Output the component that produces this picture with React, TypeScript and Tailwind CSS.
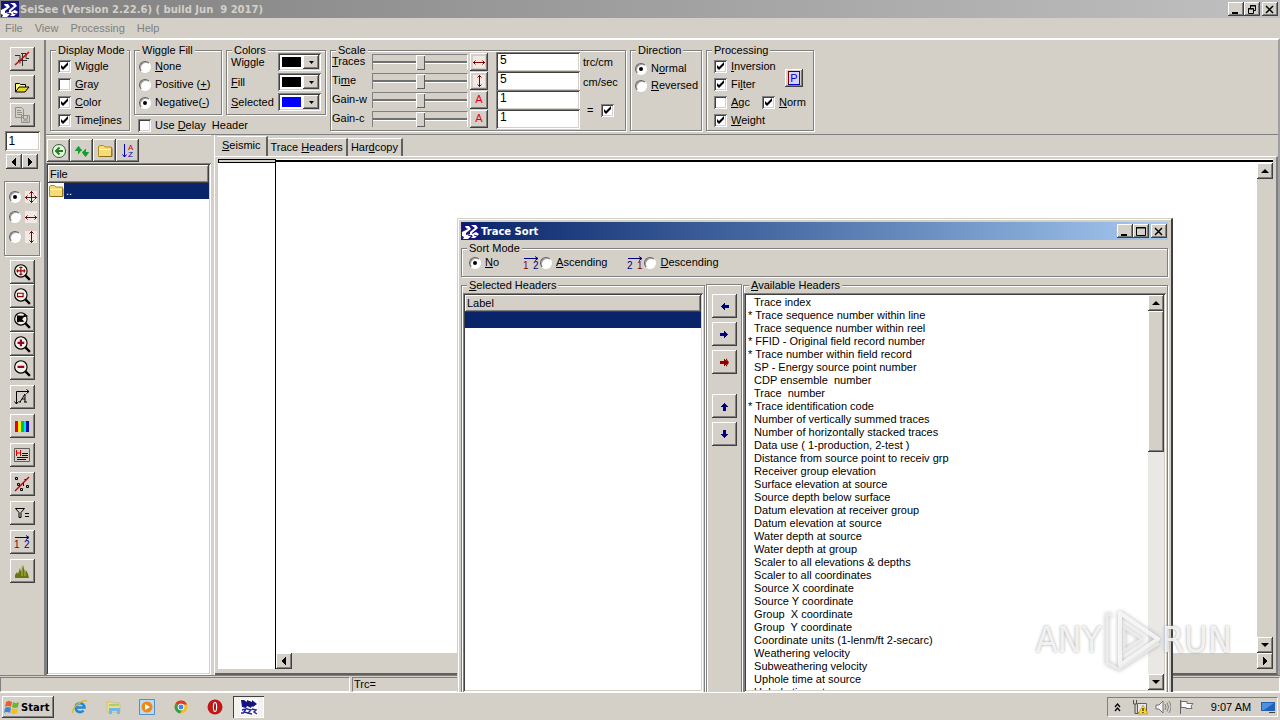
import React from "react";
import clsx from "clsx";

const RAISED =
  "bg-[#d4d0c8] shadow-[inset_-1px_-1px_0_#404040,inset_1px_1px_0_#ffffff,inset_-2px_-2px_0_#808080]";
const SUNKEN =
  "bg-white shadow-[inset_1px_1px_0_#808080,inset_-1px_-1px_0_#ffffff,inset_2px_2px_0_#404040,inset_-2px_-2px_0_#d4d0c8]";
const ETCHED = "border border-[#808080] shadow-[1px_1px_0_#ffffff,inset_1px_1px_0_#ffffff]";

// "&" marks the mnemonic letter, as in the resource files
function Mnemonic({ text }: { text: string }) {
  const at = text.indexOf("&");
  if (at < 0) return <span className="whitespace-pre">{text}</span>;
  return (
    <span className="whitespace-pre">
      {text.slice(0, at)}
      <u className="underline-offset-1">{text[at + 1]}</u>
      {text.slice(at + 2)}
    </span>
  );
}

function Group({ title, className, children }: { title: string; className?: string; children: React.ReactNode }) {
  return (
    <fieldset className={clsx("min-w-0", ETCHED, className)}>
      <legend className="ml-[5px] bg-[#d4d0c8] px-0.5 leading-3">
        <Mnemonic text={title} />
      </legend>
      {children}
    </fieldset>
  );
}

function Check({ text, label, checked = false }: { text?: string; label?: string; checked?: boolean }) {
  return (
    <label className="flex h-[17px] items-center gap-1">
      <span className="grid size-[13px] shrink-0">
        <input
          type="checkbox"
          defaultChecked={checked}
          aria-label={label}
          className={clsx("peer col-start-1 row-start-1 size-[13px] appearance-none", SUNKEN)}
        />
        <svg viewBox="0 0 13 13" className="pointer-events-none col-start-1 row-start-1 hidden size-[13px] peer-checked:block">
          <path d="M3 5v3l2 2 5-5V2L5 7z" fill="#000" />
        </svg>
      </span>
      {text && <Mnemonic text={text} />}
    </label>
  );
}

function Radio({ name, text, label, checked = false }: { name: string; text?: string; label?: string; checked?: boolean }) {
  return (
    <label className="flex h-[17px] items-center gap-1">
      <span className="grid size-3 shrink-0 place-items-center">
        <input
          type="radio"
          name={name}
          defaultChecked={checked}
          aria-label={label}
          className="peer col-start-1 row-start-1 size-3 appearance-none rounded-full border border-t-[#606060] border-r-white border-b-white border-l-[#606060] bg-white shadow-[inset_1px_1px_0_#a0a0a0]"
        />
        <span className="pointer-events-none col-start-1 row-start-1 hidden size-1 rounded-full bg-black peer-checked:block" />
      </span>
      {text && <Mnemonic text={text} />}
    </label>
  );
}

function Tool({ label, className, children }: { label: string; className?: string; children: React.ReactNode }) {
  return (
    <button type="button" aria-label={label} className={clsx("grid shrink-0 place-items-center", RAISED, className)}>
      {children}
    </button>
  );
}

function Pix({ size = 16, children, className }: { size?: number; children: React.ReactNode; className?: string }) {
  return (
    <svg width={size} height={size} viewBox="0 0 16 16" fill="none" className={className}>
      {children}
    </svg>
  );
}

function Arrow({ dir }: { dir: "up" | "down" | "left" | "right" }) {
  const d = {
    up: "M3.5 0h1v1h1v1h1v1h1v1h-7V3h1V2h1V1h1z",
    down: "M.5 0h7v1h-1v1h-1v1h-1v1h-1V3h-1V2h-1V1h-1z",
    left: "M6 0v8H5V7H4V6H3V5H2V3h1V2h1V1h1V0z",
    right: "M2 0v8h1V7h1V6h1V5h1V3H5V2H4V1H3V0z",
  }[dir];
  const flat = dir === "up" || dir === "down";
  return (
    <svg width="8" height={flat ? 4 : 8} viewBox={flat ? "0 0 8 4" : "0 0 8 8"}>
      <path d={d} fill="#000" />
    </svg>
  );
}

function AppLogo({ light = false }: { light?: boolean }) {
  if (light) {
    return (
      <svg width="18" height="16" viewBox="0 0 18 16" className="shrink-0">
        <path d="M0 0h18v16H0z" fill="#fff" />
        <path d="M1 1h3l3 2V1l5 2V1l5 4-4 3-1-1-1 2-4-2-1 2-4-1z" fill="#14147c" />
        <path d="M2 11l4-1-2 3 4 1M7 10l4 1-3 3 4 1M12 10l4 1-2 2 3 2M1 14h3" stroke="#2a2a9a" strokeWidth="1.500" fill="none" />
      </svg>
    );
  }
  return (
    <svg width="18" height="16" viewBox="0 0 18 16" className="shrink-0">
      <path d="M0 0h18v16H0z" fill="#14147c" />
      <path d="M3 3h4l2 3-5 4v2l4-1 1 2-3 3H1l1-2-2-1V9l6-3-2-1zM9 2h5l2 3-6 5v1l4-2 3 2-4 4H9l2-2-3-1V9l5-4z" fill="#fff" />
      <path d="M6 12l4 1M12 12l3 1" stroke="#14147c" />
    </svg>
  );
}

function Folder() {
  return (
    <Pix>
      <path d="M1.500 4l1-1.500h4L8 4h6.500v9.500h-13z" fill="#f6dc76" stroke="#b08a24" />
      <path d="M2 6.500h12" stroke="#fff3b8" />
      <path d="M3 13.500h12v-8" stroke="#8a6a18" />
    </Pix>
  );
}

function MoveIcon({ kind }: { kind: "both" | "h" | "v" }) {
  return (
    <svg width="12" height="12" viewBox="0 0 12 12" fill="none" stroke="#800000" className="shrink-0 bg-[#f4e8e4]">
      {kind !== "v" && <path d="M0 6.500h12M2.500 4.500l-2 2 2 2M9.500 4.500l2 2-2 2" />}
      {kind !== "h" && <path d="M6.500 0v12M4.500 2.500l2-2 2 2M4.500 9.500l2 2 2-2" />}
    </svg>
  );
}

function Lens({ children }: { children?: React.ReactNode }) {
  return (
    <Pix size={18}>
      <circle cx="7" cy="7" r="5.500" fill="#f4f0ea" stroke="#000" />
      <path d="M11 11l4 4" stroke="#000" strokeWidth="2" />
      {children}
    </Pix>
  );
}

function SortIcon({ first, second }: { first: string; second: string }) {
  return (
    <svg width="17" height="14" viewBox="0 0 17 14">
      <path d="M1 2.500h14M12 .5l3 2-3 2" stroke="#000080" fill="none" />
      <text x="0" y="13" fontSize="10" fill={first === "1" ? "#800000" : "#000080"}>{first}</text>
      <text x="10" y="13" fontSize="10" fill={second === "1" ? "#800000" : "#000080"}>{second}</text>
    </svg>
  );
}

function WindowButtons({ restore = false }: { restore?: boolean }) {
  return (
    <div className="ml-auto flex">
      <Tool label="Minimize" className="h-3.5 w-4">
        <svg width="10" height="9" viewBox="0 0 10 9"><path d="M1 7h6v2H1z" /></svg>
      </Tool>
      <Tool label={restore ? "Restore" : "Maximize"} className="h-3.5 w-4">
        <svg width="10" height="9" viewBox="0 0 10 9" fill="none" stroke="#000">
          {restore ? <path d="M3.500 3V.5h5v5H7M3 1h6M1.500 3.500h5v5h-5zM1 4h6" /> : <path d="M.5.500h9v8h-9zM0 1h10" />}
        </svg>
      </Tool>
      <Tool label="Close" className="ml-0.5 h-3.5 w-4">
        <svg width="10" height="9" viewBox="0 0 10 9"><path d="M1 1l7 7M8 1L1 8" stroke="#000" strokeWidth="1.500" /></svg>
      </Tool>
    </div>
  );
}

function ColorPick({ text, id, color }: { text: string; id: string; color: "black" | "blue" }) {
  return (
    <div className="flex h-5 items-center justify-between pr-1 pl-1">
      <label htmlFor={id}><Mnemonic text={text} /></label>
      <div className={clsx("flex h-[18px] w-[43px] p-0.5", SUNKEN)}>
        <select
          id={id}
          className={clsx(
            "min-w-0 flex-1 appearance-none border-2 border-white text-transparent",
            color === "blue" ? "bg-[#0000ff]" : "bg-black"
          )}
        >
          <option>{color}</option>
        </select>
        <span className={clsx("pointer-events-none grid w-4 place-items-center", RAISED)}>
          <svg width="5" height="3" viewBox="0 0 5 3"><path d="M0 0h5L2.500 3z" /></svg>
        </span>
      </div>
    </div>
  );
}

const scales = [
  { text: "&Traces", id: "traces", value: "5", icon: "h" },
  { text: "Ti&me", id: "time", value: "5", icon: "v" },
  { text: "Gain-w", id: "gain-w", value: "1", icon: "A" },
  { text: "Gain-c", id: "gain-c", value: "1", icon: "A" },
];

function ScaleRow({ text, id, value, icon }: (typeof scales)[number]) {
  return (
    <div className="flex h-[19px] items-center">
      <label htmlFor={id} className="w-10 shrink-0"><Mnemonic text={text} /></label>
      <input
        type="range"
        aria-label={id + " slider"}
        className="h-4 w-24 appearance-none border-t border-l border-[#808080] border-r border-r-white bg-transparent [&::-webkit-slider-runnable-track]:h-[3px] [&::-webkit-slider-runnable-track]:border-b [&::-webkit-slider-runnable-track]:border-white [&::-webkit-slider-runnable-track]:bg-[#707070] [&::-webkit-slider-thumb]:-mt-1.5 [&::-webkit-slider-thumb]:h-[15px] [&::-webkit-slider-thumb]:w-[9px] [&::-webkit-slider-thumb]:appearance-none [&::-webkit-slider-thumb]:bg-[#d4d0c8] [&::-webkit-slider-thumb]:shadow-[inset_1px_1px_0_#ffffff,inset_-1px_-1px_0_#606060]"
      />
      <Tool label={"Reset " + id} className="ml-0.5 size-[18px]">
        {icon === "A" ? (
          <span className="text-red-600">A</span>
        ) : (
          <MoveIcon kind={icon as "h" | "v"} />
        )}
      </Tool>
      <input id={id} defaultValue={value} className={clsx("ml-2 h-5 w-[84px] px-1 pb-1 text-xs", SUNKEN)} />
    </div>
  );
}

function Ribbon() {
  return (
    <div className="flex items-start gap-1 border-b border-[#808080] pt-1 pb-[3px] pl-1">
      <Group title="Display Mode" className="h-[87px] w-20">
        <div className="flex flex-col gap-px pt-0.5 pl-[7px]">
          <Check text="Wi&ggle" checked />
          <Check text="&Gray" />
          <Check text="&Color" checked />
          <Check text="Time&lines" checked />
        </div>
      </Group>
      <div className="flex h-[87px] flex-col gap-0.5">
        <div className="flex gap-1">
          <Group title="Wiggle Fill" className="h-[71px] w-[88px]">
            <div className="flex flex-col gap-px pt-0.5 pl-1">
              <Radio name="fill" text="&None" />
              <Radio name="fill" text="Positive (&+)" />
              <Radio name="fill" text="Negative(&-)" checked />
            </div>
          </Group>
          <Group title="Colors" className="h-[71px] w-[100px]">
            <div className="-mt-1 flex flex-col">
              <ColorPick text="Wi&ggle" id="c-wiggle" color="black" />
              <ColorPick text="&Fill" id="c-fill" color="black" />
              <ColorPick text="&Selected" id="c-selected" color="blue" />
            </div>
          </Group>
        </div>
        <div className="pl-1">
          <Check text="Use &Delay  Header" />
        </div>
      </div>
      <Group title="Scale" className="h-[87px] w-[296px]">
        <div className="-mt-1 flex pl-px">
          <div className="flex flex-col">
            {scales.map((s) => (
              <ScaleRow key={s.id} {...s} />
            ))}
          </div>
          <div className="flex flex-col pl-[3px]">
            <span className="flex h-5 items-center">trc/cm</span>
            <span className="flex h-5 items-center">cm/sec</span>
            <div className="flex flex-1 items-center gap-2 pl-1">
              =
              <Check label="Link gains" checked />
            </div>
          </div>
        </div>
      </Group>
      <Group title="Direction" className="h-[87px] w-[72px]">
        <div className="flex flex-col pt-1 pl-1">
          <Radio name="direction" text="N&ormal" checked />
          <Radio name="direction" text="&Reversed" />
        </div>
      </Group>
      <Group title="Processing" className="h-[87px] w-[108px]">
        <div className="grid grid-cols-[48px_auto] gap-y-px pt-0.5 pl-[7px]">
          <div className="flex flex-col gap-px">
            <Check text="&Inversion" checked />
            <Check text="Fi&lter" checked />
          </div>
          <div className="flex items-center pt-1 pl-[23px]">
            <Tool label="Processing parameters" className="size-[18px]">
              <span className="border border-r-[#800000] border-l-[#800000] bg-[#d8d0ff] px-px leading-3 text-[#0000c0]">P</span>
            </Tool>
          </div>
          <Check text="&Agc" />
          <Check text="&Norm" checked />
          <Check text="&Weight" checked />
        </div>
      </Group>
    </div>
  );
}

function Rail() {
  return (
    <aside className="flex w-[46px] shrink-0 flex-col items-center border-r-2 border-[#808080] pt-[7px]">
      <div className="flex flex-col gap-1">
        <Tool label="Disable grid" className="h-6 w-[25px]">
          <Pix>
            <path d="M1 4.500h5v8M7 2.500h5v5h3M4 9.500h9M8.500 3v12" stroke="#303030" />
            <path d="M1 14L15 1" stroke="#d00000" strokeWidth="1.500" />
          </Pix>
        </Tool>
        <Tool label="Open" className="h-6 w-[25px]">
          <Pix>
            <path d="M1.500 13V4.500h4l1 1h5V8" fill="#ffff90" stroke="#000" />
            <path d="M1.500 13L5 8h10l-4 5z" fill="#e8d820" stroke="#000" />
          </Pix>
        </Tool>
        <Tool label="Save as" className="h-6 w-[25px]">
          <Pix>
            <path d="M1.500.500h6l2 2v8h-8zM3 3.500h4M3 5.500h5M3 7.500h5M7.500 8.500h8v7h-8zM9.500 9v3h4V9M10 15v-2h3v2" stroke="#909090" />
          </Pix>
        </Tool>
      </div>
      <input aria-label="Trace" defaultValue="1" className={clsx("mt-1 h-5 w-[35px] px-1 text-xs", SUNKEN)} />
      <div className="mt-[3px] flex">
        <Tool label="Previous" className="h-[15px] w-4"><Arrow dir="left" /></Tool>
        <Tool label="Next" className="h-[15px] w-4"><Arrow dir="right" /></Tool>
      </div>
      <div className={clsx("mt-3 flex h-[75px] w-9 flex-col gap-[3px] pt-1.5 pl-1", ETCHED)}>
        <div className="flex items-center gap-1"><Radio name="move" label="Both" checked /><MoveIcon kind="both" /></div>
        <div className="flex items-center gap-1"><Radio name="move" label="Horizontal" /><MoveIcon kind="h" /></div>
        <div className="flex items-center gap-1"><Radio name="move" label="Vertical" /><MoveIcon kind="v" /></div>
      </div>
      <div className="mt-1 flex flex-col">
        <Tool label="Fit" className="h-6 w-[25px]">
          <Lens><path d="M3 7h8M7 3v8M4 5.500v3M10 5.500v3M5.500 4h3M5.500 10h3" stroke="#900000" /></Lens>
        </Tool>
        <Tool label="Zoom area" className="h-6 w-[25px]">
          <Lens><path d="M4 5.500h5v3H4z" stroke="#900000" /></Lens>
        </Tool>
        <Tool label="Previous zoom" className="h-6 w-[25px]">
          <Lens><path d="M4 4v5h5L7.500 7.500Q9 4 13 4.500M4 10l7-7" fill="#000" stroke="#000" /></Lens>
        </Tool>
        <Tool label="Zoom in" className="h-6 w-[25px]">
          <Lens><path d="M4 7h6M7 4v6" stroke="#a00020" strokeWidth="2" /></Lens>
        </Tool>
        <Tool label="Zoom out" className="h-6 w-[25px]">
          <Lens><path d="M4 7h6" stroke="#a00020" strokeWidth="2" /></Lens>
        </Tool>
      </div>
      <div className="mt-[5px] flex flex-col gap-[5px]">
        <Tool label="Axes" className="h-6 w-[25px]">
          <Pix>
            <path d="M2.500 15V2.500H15M.5 12.500l2 2.500 2-2.500M12.500.500l2.500 2-2.500 2" stroke="#000" />
            <path d="M6 13l5-8v8M8 10h3M5 13h2M10 13h3" stroke="#000" />
          </Pix>
        </Tool>
        <Tool label="Palette" className="h-6 w-[25px]">
          <Pix>
            <path d="M1 3h3v11H1z" fill="#f00000" />
            <path d="M4 3h3v11H4z" fill="#fff000" />
            <path d="M7 3h3v11H7z" fill="#00c030" />
            <path d="M10 3h2v11h-2z" fill="#00e0ff" />
            <path d="M12 3h3v11h-3z" fill="#1010b0" />
          </Pix>
        </Tool>
        <Tool label="Header text" className="h-6 w-[25px]">
          <Pix>
            <path d="M.5 1.500h15v13H.5z" stroke="#606060" />
            <path d="M2.500 3v6M6.500 3v6M3 6h4" stroke="#d00000" />
            <path d="M8 6.500h6M8 8.500h6M3 10.500h11M3 12.500h9" stroke="#0000a0" />
          </Pix>
        </Tool>
        <Tool label="Clear picks" className="h-6 w-[25px]">
          <Pix>
            <path d="M1.500 1.500h2v2h-2zM3.500 7.500h2v2h-2zM6.500 12.500h2v2h-2zM12.500 9.500h2v2h-2zM10.500 3.500h2M9.500 7v3" stroke="#000" />
            <path d="M1 15L15 1" stroke="#c00000" strokeWidth="1.500" />
          </Pix>
        </Tool>
        <Tool label="Filter" className="h-6 w-[25px]">
          <Pix>
            <path d="M1.500 3.500h9l-3.500 4v5H5v-5zM11 8.500h4M11 11.500h4" stroke="#000" />
          </Pix>
        </Tool>
        <Tool label="Sort" className="h-6 w-[25px]"><SortIcon first="1" second="2" /></Tool>
        <Tool label="Histogram" className="h-6 w-[25px]">
          <Pix>
            <path d="M1 15v-3l2-3 1 2 2-6 1 4 2-7 2 7 1-2 2 4 1 4z" fill="#6c7410" />
            <path d="M8 3v10M11 8v5" stroke="#b0b850" />
          </Pix>
        </Tool>
      </div>
    </aside>
  );
}

function FilePanel() {
  return (
    <section className="flex w-[165px] shrink-0 flex-col">
      <div className="flex h-7 items-start border-t border-white pt-[3px] pl-px">
        <Tool label="Back" className="size-[23px]">
          <Pix>
            <circle cx="8" cy="8" r="6.500" fill="#e8f4e0" stroke="#306030" />
            <path d="M12 8H6M8.500 4.500L5 8l3.500 3.500" stroke="#208020" strokeWidth="2" />
          </Pix>
        </Tool>
        <Tool label="Refresh" className="size-[23px]">
          <Pix>
            <path d="M4.500 11V7h3M1.500 7.500l3-4 3 4zM11.500 6v3h-3M8.500 9.500l3 4 3-4z" fill="#10a030" stroke="#10a030" />
          </Pix>
        </Tool>
        <Tool label="Parent folder" className="size-[23px]"><Folder /></Tool>
        <Tool label="Sort by name" className="size-[23px]">
          <Pix>
            <path d="M4.500 1v13M2.500 11.500l2 2.500 2-2.500" stroke="#0000c0" />
            <text x="8" y="7" fontSize="8" fill="#c00000">A</text>
            <text x="8" y="14" fontSize="8" fill="#0000c0">Z</text>
          </Pix>
        </Tool>
      </div>
      <div className={clsx("flex-1 p-0.5", SUNKEN)}>
        <table className="w-full border-collapse text-left">
          <thead>
            <tr>
              <th className={clsx("h-[18px] p-0 pl-0.5 font-normal", RAISED)}>File</th>
            </tr>
          </thead>
          <tbody>
            <tr>
              <td className="p-0">
                <div className="flex h-4">
                  <Folder />
                  <span className="flex-1 bg-[#0a246a] pl-0.5 leading-4 text-white">..</span>
                </div>
              </td>
            </tr>
          </tbody>
        </table>
      </div>
    </section>
  );
}

function Seismic() {
  return (
    <section className="ml-[3px] flex min-w-0 flex-1 flex-col border-l border-white">
      <div role="tablist" className="flex h-[21px] items-end pl-0.5">
        <button role="tab" type="button" className="h-5 border-t border-r-2 border-t-white border-r-[#606060] px-[5px] pb-1 leading-4">
          <Mnemonic text="&Seismic" />
        </button>
        <button role="tab" type="button" className="h-[18px] border-t border-r-2 border-t-white border-r-[#606060] px-[3px]">
          <Mnemonic text="Trace &Headers" />
        </button>
        <button role="tab" type="button" className="h-[18px] border-t border-r-2 border-t-white border-r-[#606060] px-[3px]">
          <Mnemonic text="Har&dcopy" />
        </button>
      </div>
      <div className="flex flex-1 flex-col border-t border-r-2 border-b-2 border-t-white border-r-[#808080] border-b-[#606060] px-[3px] pt-0.5 pb-1">
        <div className="flex h-1 bg-white">
          <div className="w-[58px] border border-black bg-[#d4d0c8]" />
          <div className="mt-px h-0.5 flex-1 bg-black" />
        </div>
        <div className="flex flex-1">
          <div className="w-[58px] border-r border-black bg-white" />
          <div className="flex flex-1 flex-col">
            <div className="flex-1 bg-white" />
            <div className="flex h-4 bg-[#d4d0c8]">
              <Tool label="Scroll left" className="w-4"><Arrow dir="left" /></Tool>
            </div>
          </div>
          <div className="flex w-4 flex-col bg-[#d4d0c8]">
            <Tool label="Scroll up" className="h-4"><Arrow dir="up" /></Tool>
            <div className="flex-1" />
            <Tool label="Scroll down" className="h-4"><Arrow dir="down" /></Tool>
            <Tool label="Scroll right" className="h-4"><Arrow dir="right" /></Tool>
          </div>
        </div>
      </div>
    </section>
  );
}

const headers = [
  "  Trace index",
  "* Trace sequence number within line",
  "  Trace sequence number within reel",
  "* FFID - Original field record number",
  "* Trace number within field record",
  "  SP - Energy source point number",
  "  CDP ensemble  number",
  "  Trace  number",
  "* Trace identification code",
  "  Number of vertically summed traces",
  "  Number of horizontally stacked traces",
  "  Data use ( 1-production, 2-test )",
  "  Distance from source point to receiv grp",
  "  Receiver group elevation",
  "  Surface elevation at source",
  "  Source depth below surface",
  "  Datum elevation at receiver group",
  "  Datum elevation at source",
  "  Water depth at source",
  "  Water depth at group",
  "  Scaler to all elevations & depths",
  "  Scaler to all coordinates",
  "  Source X coordinate",
  "  Source Y coordinate",
  "  Group  X coordinate",
  "  Group  Y coordinate",
  "  Coordinate units (1-lenm/ft 2-secarc)",
  "  Weathering velocity",
  "  Subweathering velocity",
  "  Uphole time at source",
  "  Uphole time at group",
];

function BlockArrow({ className, double = false }: { className: string; double?: boolean }) {
  return (
    <svg width="9" height="9" viewBox="0 0 9 9" fill="currentColor" className={className}>
      <path d="M0 3h4V1h1v1h1v1h1v1h1v1H7v1H6v1H5v1H4V6H0z" />
      {double && <path d="M6 0l3 4.500L6 9V7l1.500-2.500L6 2z" />}
    </svg>
  );
}

function TraceSort() {
  return (
    <div
      role="dialog"
      aria-label="Trace Sort"
      className="absolute top-[218px] bottom-7 left-[457px] flex w-[716px] flex-col overflow-hidden border-t border-r-2 border-l border-t-[#d4d0c8] border-r-[#404040] border-l-[#d4d0c8] bg-[#d4d0c8] px-[3px] pt-[3px] shadow-[inset_1px_1px_0_#ffffff]"
    >
      <div className="flex h-[18px] shrink-0 items-center gap-px bg-linear-to-r from-[#0a246a] to-[#a6caf0] pr-px pl-px font-['DejaVu_Sans'] text-[10px] font-bold text-white">
        <AppLogo />
        Trace Sort
        <WindowButtons />
      </div>
      <Group title="Sort Mode" className="mt-0.5 h-[35px] shrink-0">
        <div className="flex items-center pl-[7px]">
          <Radio name="sort" text="&No" checked />
          <div className="ml-6 flex items-center">
            <SortIcon first="1" second="2" />
            <Radio name="sort" text="&Ascending" />
          </div>
          <div className="ml-5 flex items-center">
            <SortIcon first="2" second="1" />
            <Radio name="sort" text="&Descending" />
          </div>
        </div>
      </Group>
      <div className="mt-0.5 flex min-h-0 flex-1 gap-px">
        <Group title="&Selected Headers" className="w-[244px] border-b-0">
          <div className={clsx("mx-px mt-0.5 h-[399px] p-0.5", SUNKEN)}>
            <table className="w-full border-collapse text-left">
              <thead>
                <tr>
                  <th className={clsx("h-[17px] p-0 pl-0.5 font-normal", RAISED)}>Label</th>
                </tr>
              </thead>
              <tbody>
                <tr>
                  <td className="h-4 bg-[#0a246a] p-0" />
                </tr>
              </tbody>
            </table>
          </div>
        </Group>
        <div className={clsx("mt-[5px] flex w-9 flex-col items-center gap-1 border-b-0 pt-[9px]", ETCHED)}>
          <Tool label="Add" className="h-6 w-[25px]"><BlockArrow className="rotate-180 text-[#000080]" /></Tool>
          <Tool label="Remove" className="h-6 w-[25px]"><BlockArrow className="text-[#000080]" /></Tool>
          <Tool label="Remove all" className="h-6 w-[25px]"><BlockArrow double className="text-[#900000]" /></Tool>
          <Tool label="Move up" className="mt-4 h-6 w-[25px]"><BlockArrow className="-rotate-90 text-[#000080]" /></Tool>
          <Tool label="Move down" className="h-6 w-[25px]"><BlockArrow className="rotate-90 text-[#000080]" /></Tool>
        </div>
        <Group title="&Available Headers" className="flex-1 border-b-0">
          <div className={clsx("mt-0.5 mr-px flex h-[399px] p-0.5", SUNKEN)}>
            <ul className="flex-1 overflow-hidden pt-px pl-0.5">
              {headers.map((h) => (
                <li key={h} className="h-[13px] leading-[13px] whitespace-pre">{h}</li>
              ))}
            </ul>
            <div className="flex w-4 flex-col bg-[#eae8e4]">
              <Tool label="List up" className="h-4"><Arrow dir="up" /></Tool>
              <div className={clsx("h-[141px]", RAISED)} />
              <div className="flex-1" />
              <Tool label="List down" className="h-4"><Arrow dir="down" /></Tool>
            </div>
          </div>
        </Group>
      </div>
    </div>
  );
}

function Taskbar() {
  return (
    <footer className="relative flex h-7 shrink-0 items-center border-t border-white pt-px pl-0.5">
      <button type="button" className={clsx("flex h-[22px] w-[52px] items-center gap-px pl-0.5 font-['DejaVu_Sans'] text-[10px] font-bold", RAISED)}>
        <Pix>
          <path d="M2 3q3-2 6 0L7 8Q4 6 1 8z" fill="#e8602c" />
          <path d="M9 3q3 2 6 0l-1 5q-3 2-6 0z" fill="#6cb43c" />
          <path d="M1 9q3-2 6 0l-1 5q-3-2-6 0z" fill="#3c88d8" />
          <path d="M8 9q3 2 6 0l-1 5q-3 2-6 0z" fill="#f4c020" />
        </Pix>
        Start
      </button>
      <div className="flex items-center pl-[18px]">
        <a href="#ie" aria-label="Internet Explorer" className="w-[34px]">
          <Pix>
            <path d="M3.500 8.500h9a4.500 4.500 0 1 0-1 3" stroke="#2088d8" strokeWidth="2.600" />
            <path d="M1 14C-1 10 9 0 15 2" stroke="#e8b830" strokeWidth="1.400" />
          </Pix>
        </a>
        <a href="#explorer" aria-label="Windows Explorer" className="w-[33px]">
          <Pix>
            <path d="M1 3h5l1 1h7v9H1z" fill="#f0dc88" stroke="#c8ac50" strokeWidth=".5" />
            <path d="M3 15V9h11v6h-3v-3H6v3z" fill="#70b8e8" />
            <path d="M3 5h10v2H3z" fill="#a8d070" />
          </Pix>
        </a>
        <a href="#media" aria-label="Media Player" className="w-[34px]">
          <Pix>
            <path d="M.5.500h15v15H.5z" fill="#b8dcf4" stroke="#5090c8" />
            <circle cx="8" cy="8" r="5.500" fill="#f08818" />
            <path d="M6 5v6l5-3z" fill="#fff" />
          </Pix>
        </a>
        <a href="#chrome" aria-label="Chrome" className="w-[34px]">
          <Pix>
            <circle cx="8" cy="8" r="6.500" fill="#f4c020" />
            <path d="M8 8L2.400 4.800A6.500 6.500 0 0 1 14 5.500H8z" fill="#e03828" />
            <path d="M8 8L2.400 4.800A6.500 6.500 0 0 0 7 14.400l3-5z" fill="#30a048" />
            <circle cx="8" cy="8" r="3" fill="#4088e8" stroke="#fff" />
          </Pix>
        </a>
        <a href="#opera" aria-label="Opera" className="w-[26px]">
          <Pix>
            <circle cx="8" cy="8" r="7.500" fill="#c01818" />
            <ellipse cx="8" cy="8" rx="2.200" ry="5" fill="#fff" />
            <ellipse cx="8" cy="8" rx="1" ry="4" fill="#a01010" />
          </Pix>
        </a>
        <button type="button" aria-label="SeiSee" className="grid h-[22px] w-[31px] place-items-center bg-[#f4f2ee] shadow-[inset_1px_1px_0_#404040,inset_-1px_-1px_0_#ffffff]">
          <AppLogo light />
        </button>
      </div>
      <div className="mr-0.5 ml-auto flex h-5 items-center gap-[7px] border border-t-[#808080] border-r-white border-b-white border-l-[#808080] pr-px pl-1.5">
        <svg width="7" height="9" viewBox="0 0 7 9" fill="none" stroke="#000" strokeWidth="1.300"><path d="M1 4l2.500-3L6 4M1 8l2.500-3L6 8" /></svg>
        <Pix className="ml-1">
          <path d="M5.500 4.500h9v9h-9z" fill="#e8e8e8" stroke="#606060" />
          <path d="M1.500 1v4h3V1M3 5v9.500h3" stroke="#505050" />
          <path d="M11 6l5 9H6z" fill="#ffd820" stroke="#a08000" strokeWidth=".5" />
          <path d="M11 9v3M11 13v1" stroke="#000" />
        </Pix>
        <Pix>
          <path d="M1 6h3l4-4v12l-4-4H1z" fill="#f8f8f8" stroke="#707070" />
          <path d="M10 5q2 3 0 6M12 3.500q3 4.500 0 9M14 2q4 6 0 12" stroke="#808080" />
        </Pix>
        <Pix>
          <path d="M2.500 1v14" stroke="#606060" />
          <path d="M3 2.500h6v2h6l-2 2.500 1 2.500H8v-1H3z" fill="#fff" stroke="#707070" />
        </Pix>
        <span className="ml-2 w-[44px] text-center whitespace-nowrap">9:07 AM</span>
        <Pix>
          <path d="M1 3h14v9H1z" fill="#2060b8" />
          <path d="M2 4h12L4 11H2z" fill="#4c90e0" />
          <path d="M9 13h6v1H9z" fill="#404040" />
        </Pix>
      </div>
    </footer>
  );
}

function Watermark() {
  return (
    <div className="pointer-events-none absolute right-12 bottom-12 flex h-16 items-center font-['Liberation_Sans_Narrow','DejaVu_Sans_Condensed',sans-serif] text-4xl text-white/80 [text-shadow:0_0_3px_#a0a0a0]">
      ANY
      <svg width="60" height="62" viewBox="0 0 60 62" fill="none" className="drop-shadow-[0_0_2px_#a0a0a0]">
        <path d="M18 4L56 30 18 56z" stroke="#fff" strokeOpacity=".8" strokeWidth="4" strokeLinejoin="round" />
        <path d="M10 6H5v48l12 6 40-26M22 18v24l18-12z" stroke="#f0f0f0" strokeOpacity=".8" strokeWidth="3" />
      </svg>
      RUN
    </div>
  );
}

export default function App() {
  return (
    <div className="relative flex h-screen min-h-[640px] flex-col overflow-hidden bg-[#d4d0c8] font-['Liberation_Sans',sans-serif] text-[11px] leading-[13px] text-black">
      <header className="flex h-[18px] shrink-0 items-center gap-px bg-linear-to-r from-[#808080] to-[#c0c0c0] pr-0.5 pl-px font-['DejaVu_Sans'] text-[10px] font-bold text-[#d4d0c8]">
        <AppLogo />
        <span className="whitespace-pre">SeiSee (Version 2.22.6) ( build Jun  9 2017)</span>
        <WindowButtons restore />
      </header>
      <nav className="flex h-5 shrink-0 items-center gap-3 pl-[5px] text-[#808080]">
        <a href="#file">File</a>
        <a href="#view">View</a>
        <a href="#processing">Processing</a>
        <a href="#help">Help</a>
      </nav>
      <main className="flex min-h-0 flex-1 border-t-2 border-r-2 border-t-white border-r-[#a0a0a0]">
        <Rail />
        <div className="flex min-w-0 flex-1 flex-col">
          <Ribbon />
          <div className="flex min-h-0 flex-1">
            <FilePanel />
            <Seismic />
          </div>
        </div>
      </main>
      <div className="flex h-[17px] shrink-0 gap-0.5 border-t border-[#808080] pt-px">
        <div className="w-[350px] border border-t-[#808080] border-r-white border-b-white border-l-[#808080]" />
        <div className="flex-1 border border-t-[#808080] border-r-white border-b-white border-l-[#808080] pl-px">Trc=</div>
      </div>
      <TraceSort />
      <Watermark />
      <Taskbar />
    </div>
  );
}
